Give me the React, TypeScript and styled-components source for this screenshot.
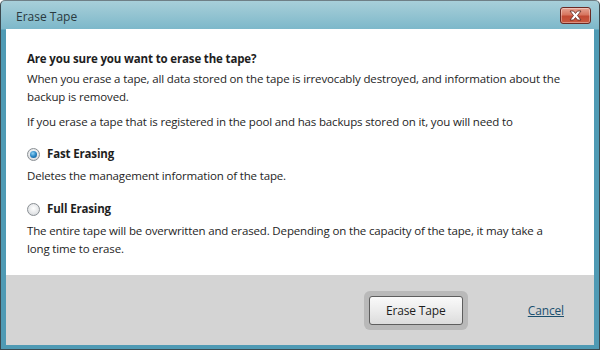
import styled, { createGlobalStyle } from 'styled-components'

const GlobalStyle = createGlobalStyle`
  html, body {
    margin: 0;
    padding: 0;
    background: #ffffff;
  }
  body {
    font-family: 'Open Sans', 'Noto Sans', sans-serif;
    font-size: 11.5px;
    letter-spacing: -0.15px;
    color: #1e1e1e;
  }
`

const Window = styled.div`
  display: flex;
  flex-direction: column;
  box-sizing: border-box;
  width: 600px;
  height: 350px;
  border: 1px solid #3c4a50;
  border-top-color: #6f7f86;
  border-radius: 5px 5px 0 0;
  background: linear-gradient(to bottom, #a8cfd9 0px, #7db8ca 28px, #4f9ab4 29px, #4f9ab4 100%);
`

const TitleBar = styled.div`
  display: flex;
  align-items: center;
  justify-content: space-between;
  height: 28px;
  padding: 0 8px 0 15px;
  flex-shrink: 0;
`

const Title = styled.div`
  font-size: 12px;
  letter-spacing: 0;
  color: #2a3a40;
  padding-top: 2px;
`

const CloseButton = styled.button`
  display: flex;
  align-items: center;
  justify-content: center;
  width: 31px;
  height: 17px;
  padding: 0;
  border: 1px solid #6a2a24;
  border-radius: 3px;
  background: linear-gradient(to bottom, #e6a493 0%, #d7765f 45%, #c24a33 55%, #c95a40 100%);
  box-shadow: inset 0 0 0 1px rgba(255, 255, 255, 0.35);
`

const Body = styled.div`
  display: flex;
  flex-direction: column;
  flex: 1;
  margin: 0 5px 4px 5px;
  background: #ffffff;
`

const Content = styled.div`
  flex: 1;
  padding: 21px 28px 0 21px;
`

const Heading = styled.div`
  font-weight: 700;
  line-height: 18px;
  color: #1e1e1e;
  margin-bottom: 2px;
`

const Paragraph = styled.p<{ $gap?: number }>`
  margin: 0 0 ${(p) => p.$gap ?? 0}px 0;
  line-height: 18px;
`

const Option = styled.label`
  display: flex;
  align-items: center;
  gap: 7px;
  font-weight: 700;
  line-height: 18px;
  margin: 0 0 4px 0;
`

const Radio = styled.span<{ $checked?: boolean }>`
  position: relative;
  box-sizing: border-box;
  width: 13px;
  height: 13px;
  border-radius: 50%;
  border: 1px solid #8a8f94;
  background: radial-gradient(circle at 50% 40%, #ffffff 0%, #e4e6e8 60%, #c6cacd 100%);

  &::after {
    content: '';
    display: ${(p) => (p.$checked ? 'block' : 'none')};
    position: absolute;
    left: 2px;
    top: 2px;
    width: 7px;
    height: 7px;
    border-radius: 50%;
    background: radial-gradient(circle at 40% 35%, #8fd2f4 0%, #2a86c4 50%, #0d4f86 100%);
  }
`

const Footer = styled.div`
  display: flex;
  align-items: center;
  justify-content: flex-end;
  gap: 60px;
  height: 70px;
  padding: 0 30px 0 0;
  background: #d4d4d4;
  flex-shrink: 0;
`

const FocusRing = styled.div`
  padding: 5px;
  border-radius: 6px;
  background: #b9b9b9;
`

const PrimaryButton = styled.button`
  display: block;
  width: 94px;
  height: 29px;
  border: 1px solid #5e5e5e;
  border-radius: 3px;
  background: linear-gradient(to bottom, #fafafa 0%, #ececec 50%, #dcdcdc 100%);
  font-family: inherit;
  font-size: 12px;
  letter-spacing: -0.15px;
  color: #1e1e1e;
  padding: 0;
`

const LinkButton = styled.a`
  color: #1b4f6e;
  text-decoration: underline;
  font-size: 12px;
  cursor: pointer;
`

const CloseIcon = () => (
  <svg width="15" height="11" viewBox="0 0 15 11">
    <path d="M2 1 L5.5 1 L7.5 3.5 L9.5 1 L13 1 L9.5 5.5 L13 10 L9.5 10 L7.5 7.5 L5.5 10 L2 10 L5.5 5.5 Z" fill="#ffffff" stroke="#5a2620" strokeWidth="0.8" strokeLinejoin="round" />
  </svg>
)

export default function App() {
  return (
    <>
      <GlobalStyle />
      <Window>
        <TitleBar>
          <Title>Erase Tape</Title>
          <CloseButton aria-label="Close">
            <CloseIcon />
          </CloseButton>
        </TitleBar>
        <Body>
          <Content>
            <Heading>Are you sure you want to erase the tape?</Heading>
            <Paragraph $gap={7}>
              When you erase a tape, all data stored on the tape is irrevocably destroyed, and information about the
              backup is removed.
            </Paragraph>
            <Paragraph $gap={14}>
              If you erase a tape that is registered in the pool and has backups stored on it, you will need to
            </Paragraph>
            <Option>
              <Radio $checked />
              Fast Erasing
            </Option>
            <Paragraph $gap={15}>Deletes the management information of the tape.</Paragraph>
            <Option>
              <Radio />
              Full Erasing
            </Option>
            <Paragraph>
              The entire tape will be overwritten and erased. Depending on the capacity of the tape, it may take a
              long time to erase.
            </Paragraph>
          </Content>
          <Footer>
            <FocusRing>
              <PrimaryButton>Erase Tape</PrimaryButton>
            </FocusRing>
            <LinkButton>Cancel</LinkButton>
          </Footer>
        </Body>
      </Window>
    </>
  )
}
